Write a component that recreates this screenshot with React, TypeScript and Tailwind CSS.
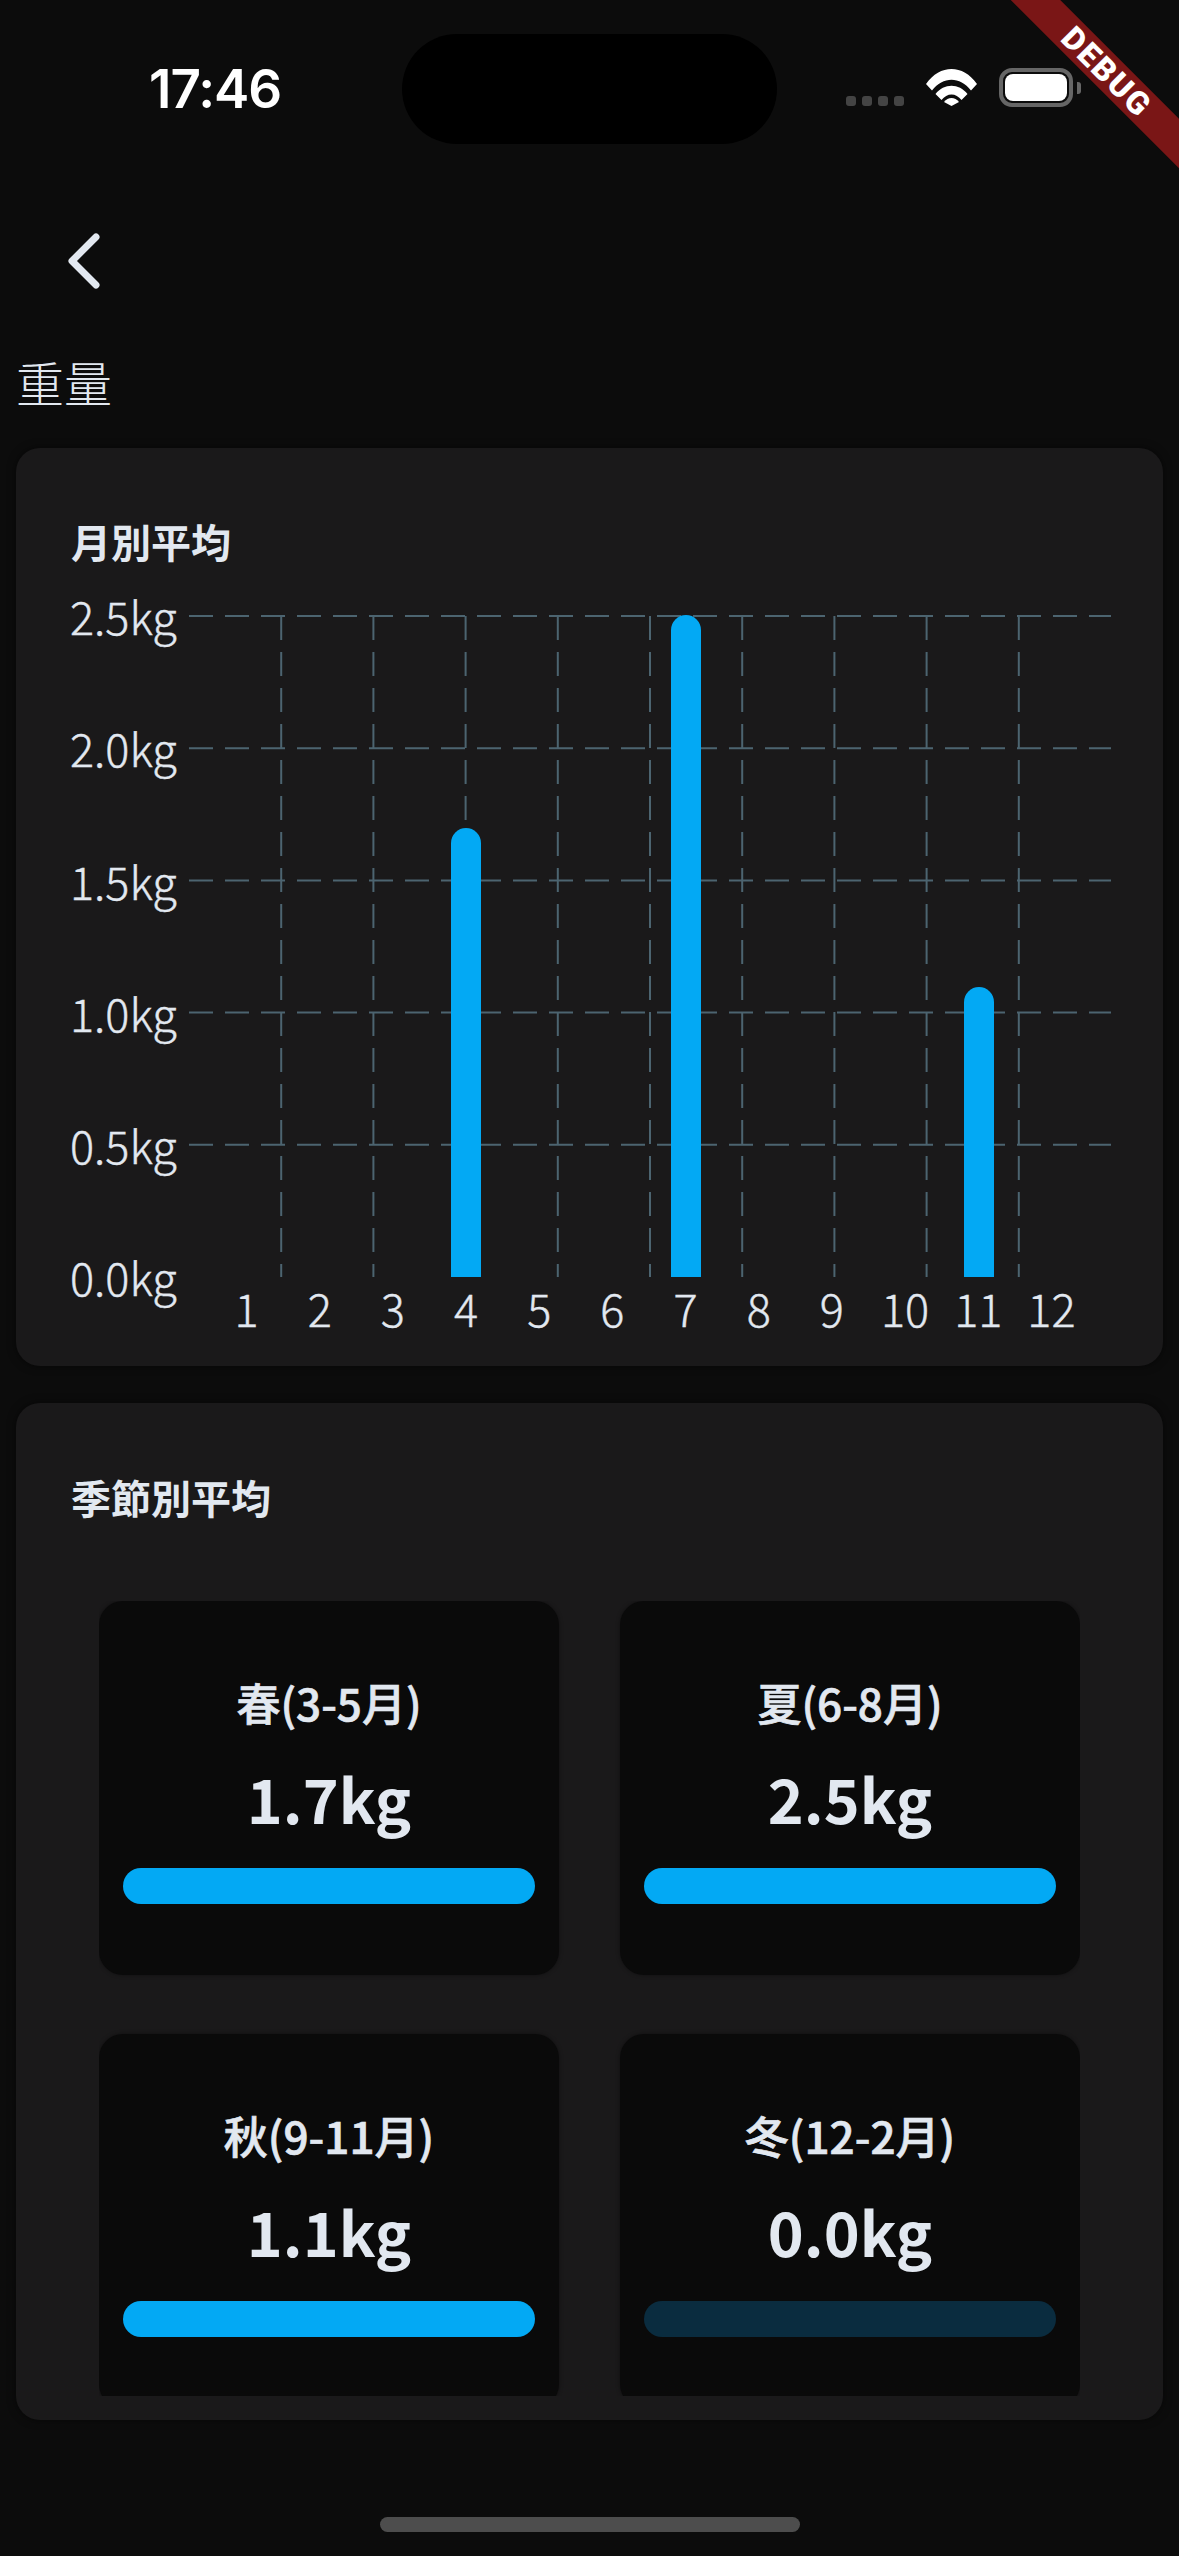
const FONT = "font-['Noto_Sans_CJK_JP','Noto_Sans',sans-serif]";

const yLabels = ["2.5kg", "2.0kg", "1.5kg", "1.0kg", "0.5kg", "0.0kg"];
const months = [1, 2, 3, 4, 5, 6, 7, 8, 9, 10, 11, 12];

// month -> bar top in plot coords
const bars = [
  { center: 277, top: 212 },
  { center: 497, top: -1 },
  { center: 790, top: 371 },
];

const PLOT_W = 922;
const PLOT_H = 661;
const STEP_Y = PLOT_H / 5;
const STEP_X = PLOT_W / 10;

const seasons = [
  { label: "春(3-5月)", value: "1.7kg", on: true },
  { label: "夏(6-8月)", value: "2.5kg", on: true },
  { label: "秋(9-11月)", value: "1.1kg", on: true },
  { label: "冬(12-2月)", value: "0.0kg", on: false },
];

function StatusBar() {
  return (
    <div className="flex h-[144px] shrink-0 pt-[34px]">
      <div className="ml-[149px] w-[253px] pt-[26px] font-['Inter',sans-serif] text-[53px] leading-[58px] font-semibold tracking-[-1px] text-white">
        17:46
      </div>
      <div className="h-[110px] w-[375px] rounded-[55px] bg-black" />
      <div className="ml-[69px] flex h-[10px] gap-[6px] self-start mt-[62px]">
        {[0, 1, 2, 3].map((i) => (
          <span key={i} className="h-[10px] w-[10px] rounded-[3px] bg-[#444444]" />
        ))}
      </div>
      <svg className="ml-[22px] mt-[35px] h-[37px] w-[51px]" viewBox="0 0 51 37">
        <path d="M0 15 C14 -5 37 -5 51 15 L45 21.5 C34 7 17 7 6 21.5 Z" fill="#fff" />
        <path d="M9.5 25 C18 14 33 14 41.5 25 L35.5 31 C30 23.5 21 23.5 15.5 31 Z" fill="#fff" />
        <path d="M18 33 C22 27.5 29 27.5 33 33 L25.5 37 Z" fill="#fff" />
      </svg>
      <div className="ml-[22px] mt-[34px] flex h-[39px] items-center self-start">
        <div className="flex h-[39px] w-[74px] rounded-[13px] border-[4px] border-[#666666] p-[2px]">
          <div className="h-full w-full rounded-[8px] bg-white" />
        </div>
        <div className="ml-[4px] h-[12px] w-[4px] rounded-r-[3px] bg-[#666666]" />
      </div>
    </div>
  );
}

function MonthlyChart() {
  return (
    <div className="flex h-[918px] shrink-0 flex-col rounded-[24px] bg-[#1a191a] pl-[55px] pt-[64px] shadow-[0_0_8px_rgba(0,0,0,0.55)]">
      <h2 className="h-[58px] text-[40px] leading-[58px] font-semibold text-[#e2e8f0]">月別平均</h2>
      <div className="mt-[46px] flex">
        <div className="flex h-[661px] w-[118px] flex-col justify-between">
          {yLabels.map((l) => (
            <div key={l} className="-ml-[1px] flex h-0 items-center text-[45px] font-light text-[#e2e8f0] [-webkit-text-stroke:0.4px_#e2e8f0]">
              {l}
            </div>
          ))}
        </div>
        <svg width={PLOT_W} height={PLOT_H} viewBox={`0 0 ${PLOT_W} ${PLOT_H}`} className="overflow-visible">
          {[0, 1, 2, 3, 4].map((i) => (
            <line key={i} x1={0} x2={PLOT_W} y1={i * STEP_Y} y2={i * STEP_Y} stroke="#4c6470" strokeWidth={2} strokeDasharray="24 12" />
          ))}
          {[1, 2, 3, 4, 5, 6, 7, 8, 9].map((i) => (
            <line key={i} x1={i * STEP_X} x2={i * STEP_X} y1={0} y2={PLOT_H} stroke="#4c6470" strokeWidth={2} strokeDasharray="24 12" />
          ))}
          {bars.map((b) => (
            <path
              key={b.center}
              d={`M${b.center - 15} ${PLOT_H} V${b.top + 15} a15 15 0 0 1 30 0 V${PLOT_H} Z`}
              fill="#03a9f4"
            />
          ))}
        </svg>
      </div>
      <div className="ml-[139px] mt-[6px] grid w-[878px] grid-cols-12 text-center text-[45px] leading-[50px] font-light text-[#e2e8f0] [-webkit-text-stroke:0.4px_#e2e8f0]">
        {months.map((m) => (
          <span key={m}>{m}</span>
        ))}
      </div>
    </div>
  );
}

function SeasonCard({ label, value, on }: { label: string; value: string; on: boolean }) {
  return (
    <div className="flex h-[374px] flex-col items-center rounded-[24px] bg-[#0a0a0a] px-[24px] pt-[71px] shadow-[0_0_4px_rgba(0,0,0,0.4)]">
      <div className="h-[60px] text-[44px] leading-[60px] font-medium text-[#e2e8f0] [-webkit-text-stroke:0.7px_#e2e8f0]">{label}</div>
      <div className="mt-[24px] h-[84px] text-[61px] leading-[84px] font-semibold text-[#e2e8f0]">{value}</div>
      <div className={`mt-[28px] h-[36px] w-full rounded-[18px] ${on ? "bg-[#03a9f4]" : "bg-[#0a2c3f]"}`} />
    </div>
  );
}

function SeasonPanel() {
  return (
    <div className="mt-[37px] flex h-[1017px] shrink-0 flex-col rounded-[24px] bg-[#1a191a] px-[83px] pt-[65px] shadow-[0_0_8px_rgba(0,0,0,0.55)]">
      <h2 className="-ml-[28px] h-[58px] text-[40px] leading-[58px] font-semibold text-[#e2e8f0]">季節別平均</h2>
      <div className="mt-[75px] h-[795px] overflow-hidden">
        <div className="grid grid-cols-2 gap-x-[61px] gap-y-[59px]">
          {seasons.map((s) => (
            <SeasonCard key={s.label} {...s} />
          ))}
        </div>
      </div>
    </div>
  );
}

function DebugBanner() {
  return (
    <div className="absolute left-[907px] top-[54px] flex h-[35px] w-[400px] rotate-45 items-center justify-center bg-[#7a1616] font-['Roboto',sans-serif] text-[32px] font-black tracking-[2px] text-white">
      DEBUG
    </div>
  );
}

export default function App() {
  return (
    <div className={`relative flex h-[2556px] w-[1179px] flex-col overflow-hidden bg-[#0c0c0c] ${FONT}`}>
      <StatusBar />
      <div className="h-[220px] shrink-0 pl-[68px] pt-[89px]">
        <svg width="34" height="58" viewBox="0 0 34 58" fill="none">
          <path d="M28 4 L4 28 L28 52" stroke="#e2e8f0" strokeWidth="7" strokeLinecap="round" strokeLinejoin="round" />
        </svg>
      </div>
      <div className="-mt-[18px] h-[70px] shrink-0 pl-[16px] text-[48px] leading-[70px] font-light text-[#e2e8f0]">重量</div>
      <div className="mx-[16px] mt-[32px] flex flex-col">
        <MonthlyChart />
        <SeasonPanel />
      </div>
      <div className="mx-auto mt-auto mb-[24px] h-[15px] w-[420px] rounded-[8px] bg-[#4d4d4d]" />
      <DebugBanner />
    </div>
  );
}
